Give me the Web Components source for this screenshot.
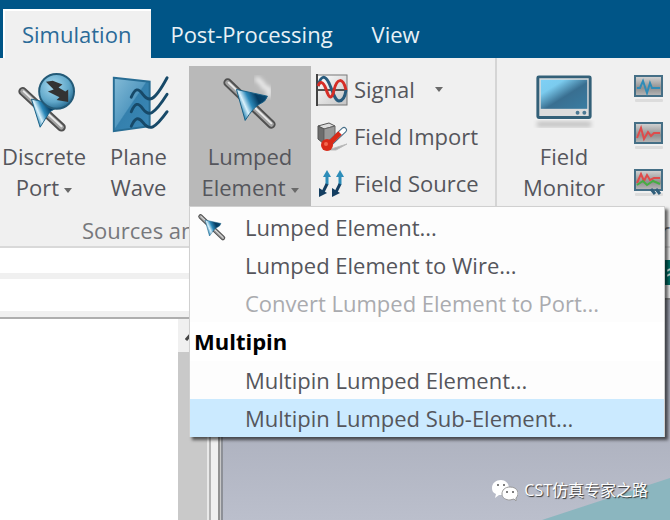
<!DOCTYPE html>
<html lang="en">
<head>
<meta charset="utf-8">
<title>Simulation</title>
<style>
  html, body {
    margin: 0;
    height: 100%;
    overflow: hidden;
  }

  body {
    font: 22px/31px "Open Sans", "Noto Sans", "Noto Sans CJK SC", sans-serif;
    color: #55565c;
  }
</style>
</head>
<body>
<cst-window>
  <cst-tabs slot="tabs">
    <cst-tab active>Simulation</cst-tab>
    <cst-tab>Post-Processing</cst-tab>
    <cst-tab>View</cst-tab>
  </cst-tabs>
  <cst-group slot="ribbon" class="sources" label="Sources and">
    <cst-button icon="port" menu style="--w: 88px">Discrete<br>Port</cst-button>
    <cst-button icon="wave" style="--w: 101px">Plane<br>Wave</cst-button>
    <cst-button icon="element" menu open style="--w: 122px">Lumped<br>Element<cst-menu slot="popup">
        <cst-item icon="element">Lumped Element...</cst-item>
        <cst-item>Lumped Element to Wire...</cst-item>
        <cst-item disabled>Convert Lumped Element to Port...</cst-item>
        <cst-heading>Multipin</cst-heading>
        <cst-item>Multipin Lumped Element...</cst-item>
        <cst-item selected>Multipin Lumped Sub-Element...</cst-item>
      </cst-menu></cst-button>
    <cst-column>
      <cst-small icon="signal" menu>Signal</cst-small>
      <cst-small icon="import">Field Import</cst-small>
      <cst-small icon="source">Field Source</cst-small>
    </cst-column>
  </cst-group>
  <cst-group slot="ribbon" class="monitors" label="Monitor">
    <cst-button icon="monitor" style="--w: 138px">Field<br>Monitor</cst-button>
    <cst-column flush>
      <cst-small icon="probe1" name="Voltage Monitor"></cst-small>
      <cst-small icon="probe2" name="Current Monitor"></cst-small>
      <cst-small icon="probe3" name="Field Probe"></cst-small>
    </cst-column>
  </cst-group>
  <cst-viewport slot="view">CST仿真专家之路</cst-viewport>
</cst-window>

<script>
const cone = `
  <defs><linearGradient id="cone" x1="0" y1="0.600" x2="1" y2="0.150">
    <stop offset="0.100" stop-color="#2f89b6"/><stop offset="0.260" stop-color="#d9f1fc"/>
    <stop offset="0.440" stop-color="#2a88b9"/><stop offset="0.680" stop-color="#053b61"/><stop offset="1" stop-color="#0c5078"/>
  </linearGradient></defs>`;

const screen = `
  <defs><linearGradient id="probe" x1="0" y1="0" x2="0" y2="1">
    <stop offset="0" stop-color="#d6d6d6"/><stop offset="0.600" stop-color="#8f8f8f"/><stop offset="1" stop-color="#b9b9b9"/>
  </linearGradient></defs>
  <rect x="2" y="25" width="28" height="3" rx="1" fill="#dcdcdc"/>
  <rect x="2" y="2" width="27" height="20" fill="url(#probe)" stroke="#456f86" stroke-width="2"/>`;

// every icon: [viewBox width, viewBox height, markup]
const icons = {
  port: [64, 64, `${cone}
    <defs><radialGradient id="ball" cx="0.400" cy="0.350" r="0.700">
      <stop offset="0" stop-color="#a6d9ef"/><stop offset="0.650" stop-color="#60a7c9"/><stop offset="1" stop-color="#22658b"/>
    </radialGradient></defs>
    <path d="M10 20L50 57" stroke="#505050" stroke-width="9" stroke-linecap="round"/>
    <path d="M10 20L50 57" stroke="#a2a2a2" stroke-width="5" stroke-linecap="round"/>
    <path d="M11 20L50 56" stroke="#e8e8e8" stroke-width="2" stroke-linecap="round"/>
    <path d="M19 28L47 34Q43 39 38 41L28 57Z" fill="url(#cone)" stroke="#195f84"/>
    <circle cx="45" cy="20" r="18" fill="url(#ball)" stroke="#235a77" stroke-width="2"/>
    <path d="M34 10L41 9L51 13L47 16L54 20L57 18L57 31L45 29L48 26L36 20L42 18Z" fill="#333"/>`],
  wave: [64, 64, `
    <defs><linearGradient id="plane" x1="0" y1="0" x2="1" y2="1">
      <stop offset="0" stop-color="#83bbd7"/><stop offset="0.480" stop-color="#559ac1"/>
      <stop offset="0.500" stop-color="#3480ad"/><stop offset="1" stop-color="#3b88b7"/>
    </linearGradient></defs>
    <path d="M6 6L43 10V56L6 61Z" fill="url(#plane)" stroke="#286d94" stroke-width="2"/>
    <g fill="none" stroke="#174968" stroke-width="3" stroke-linecap="round">
      <path d="M24 26C28 17 31 16 36 23C42 31 47 32 61 6"/>
      <path d="M24 41C28 32 31 31 36 38C42 46 47 45 61 23"/>
      <path d="M24 56C28 47 31 46 36 52C43 61 48 59 61 41"/>
    </g>`],
  element: [64, 64, `${cone}
    <defs><filter id="soft"><feGaussianBlur stdDeviation="2"/></filter></defs>
    <path class="glow" d="M38 6L46 13M44 14L52 18L51 26" fill="none" stroke="#eee" stroke-width="5" filter="url(#soft)"/>
    <path d="M9 11L54 54" stroke="#505050" stroke-width="9" stroke-linecap="round"/>
    <path d="M9 11L54 54" stroke="#a2a2a2" stroke-width="5" stroke-linecap="round"/>
    <path d="M10 11L54 53" stroke="#e8e8e8" stroke-width="2" stroke-linecap="round"/>
    <path d="M18 18L50 25Q48 31 42 33Q36 36 27 50Z" fill="url(#cone)" stroke="#195f84"/>`],
  signal: [32, 32, `
    <defs><linearGradient id="sg" x1="0" y1="0" x2="1" y2="1">
      <stop offset="0" stop-color="#fff"/><stop offset="1" stop-color="#c4c4c4"/>
    </linearGradient></defs>
    <rect x="1" y="1" width="30" height="30" fill="url(#sg)" stroke="#777"/>
    <path d="M1 0V32" stroke="#444" stroke-width="2"/><path d="M2 16H31" stroke="#555" stroke-width="2"/>
    <path d="M2 12C5 1 9 1 13 9C17 18 19 27 23 27C27 27 29 23 30 16" fill="none" stroke="#285b7d" stroke-width="3"/>
    <path d="M2 12C4 7 7 7 10 15C13 25 16 26 18 16C21 4 27 3 30 16" fill="none" stroke="#d52d26" stroke-width="3"/>`],
  import: [32, 32, `
    <path d="M12 29L31 23L20 29Z" fill="#aaa" stroke="#bbb"/>
    <path d="M2 5L13 2L19 5L8 8Z" fill="#ddd" stroke="#555"/>
    <path d="M2 5L8 8V23L2 18Z" fill="#6d6d6d" stroke="#555"/>
    <path d="M8 8L19 5V18L8 23Z" fill="#999" stroke="#666"/>
    <path d="M12 24L28 9" stroke="#466e88" stroke-width="6" stroke-linecap="round"/>
    <path d="M13 23L28 9" stroke="#fff" stroke-width="4" stroke-linecap="round"/>
    <path d="M12 24L24 12" stroke="#d92a18" stroke-width="5"/>
    <circle cx="11" cy="24" r="6" fill="#d92a18"/><circle cx="10" cy="23" r="2" fill="#f36a50"/>`],
  source: [32, 32, `
    <path d="M11 17V7" stroke="#2d8db9" stroke-width="3"/><path d="M7 9L11 2L15 9Z" fill="#2d8db9"/>
    <path d="M11 16L7 24" stroke="#143e61" stroke-width="3"/><path d="M3 20V29L11 25Z" fill="#143e61"/>
    <path d="M24 17V7" stroke="#2d8db9" stroke-width="3"/><path d="M20 9L24 2L28 9Z" fill="#2d8db9"/>
    <path d="M24 16L20 24" stroke="#143e61" stroke-width="3"/><path d="M16 20V29L24 25Z" fill="#143e61"/>`],
  monitor: [64, 64, `
    <defs>
      <linearGradient id="lcd" x1="0" y1="0" x2="1" y2="1">
        <stop offset="0" stop-color="#7fd0f5"/><stop offset="0.250" stop-color="#7bcbee"/>
        <stop offset="0.550" stop-color="#396f91"/><stop offset="1" stop-color="#397da2"/>
      </linearGradient>
      <filter id="shade"><feGaussianBlur stdDeviation="2"/></filter>
    </defs>
    <rect x="4" y="51" width="56" height="6" fill="#c4c4c4" filter="url(#shade)"/>
    <rect x="5" y="5" width="54" height="42" rx="1" fill="#dcdcdc" stroke="#336078" stroke-width="3"/>
    <rect x="8" y="8" width="48" height="30" fill="url(#lcd)"/>
    <circle cx="46" cy="42" r="2" fill="#4a7893"/><circle cx="53" cy="42" r="2" fill="#4a7893"/>`],
  probe1: [32, 32, `${screen}<path d="M4 14H7L10 7L14 19L17 9L19 14H27" fill="none" stroke="#2f8cb8" stroke-width="2"/>`],
  probe2: [32, 32, `${screen}<path d="M4 17L8 7L11 18L15 11L18 15L21 12H27" fill="none" stroke="#df4b4b" stroke-width="2"/>`],
  probe3: [32, 32, `${screen}<path d="M4 15L8 6L11 13L14 7L17 12L21 10H27" fill="none" stroke="#df4b4b" stroke-width="2"/>
    <path d="M4 17L10 13L14 17L20 13L27 16" fill="none" stroke="#46ad43" stroke-width="2"/>
    <path d="M18 21L22 26M23 21L27 26" stroke="#315f7b" stroke-width="3"/>`],
};

function icon(name, size) {
  if (!icons[name]) return "";
  const [w, h, body] = icons[name];
  return `<svg class="icon" width="${size}" height="${size}" viewBox="0 0 ${w} ${h}" aria-hidden="true">${body}</svg>`;
}

const reset = `
  button {
    border: 0;
    margin: 0;
    padding: 0;
    background: none;
    font: inherit;
    color: inherit;
    text-align: inherit;
    white-space: nowrap;
  }
  svg { display: block; flex: none; }
  .arrow {
    display: inline-block;
    border: 4px solid transparent;
    border-top: 5px solid #6a6a6a;
    border-bottom: 0;
    vertical-align: middle;
  }`;

function define(name, render) {
  customElements.define(name, class extends HTMLElement {
    constructor() {
      super();
      this.attachShadow({ mode: "open" });
    }

    connectedCallback() {
      this.shadowRoot.innerHTML = render(this);
    }
  });
}

define("cst-window", () => `
  <style>
    :host { display: flex; flex-direction: column; height: 100vh; background: #fff; }
    .ribbon { display: flex; flex: none; background: #f0f0f0; border-bottom: 2px solid #d9d9d9; }
    main { display: flex; flex: 1; min-height: 0; }
    .side { display: flex; flex-direction: column; width: 223px; }
    .band { height: 25px; background: #fff; border-bottom: 6px solid #f0f0f0; }
    .tall { height: 32px; }
    .tree { display: flex; flex: 1; border-top: 2px solid #aeaeae; }
    .pane { flex: 1; background: #fff; }
    .scroll { width: 29px; background: #c9c9c9; border-right: 2px solid #e9e9e9; }
    .up { display: block; width: 100%; height: 33px; border: 0; padding: 0 0 0 7px; background: #f0f0f0; }
    .up svg { display: block; }
    .splitter { width: 7px; background: #f0f0f0; border-left: 2px solid #b3b3b3; border-right: 2px solid #929292; }
    .frame { width: 1px; background: #c8c8c8; border-right: 2px solid #8d9097; }
    .doc { display: flex; flex: 1; flex-direction: column; }
    .files { display: flex; justify-content: flex-end; padding: 12px 0 13px; background: #f0f0f0; border-bottom: 2px solid #8c8c8c; }
    .file { width: 24px; height: 25px; border: 0; padding: 0; background: #00746b; }
    .file svg { display: block; margin-left: auto; }
  </style>
  <slot name="tabs"></slot>
  <div class="ribbon"><slot name="ribbon"></slot></div>
  <main>
    <div class="side">
      <div class="band"></div>
      <div class="band tall"></div>
      <div class="tree">
        <div class="pane"></div>
        <div class="scroll"><button class="up" aria-label="Scroll up"><svg width="14" height="14" viewBox="0 0 14 14"><path d="M1 11L7 4L13 11" fill="none" stroke="#444" stroke-width="3"/></svg></button></div>
        <div class="splitter"></div>
        <div class="frame"></div>
      </div>
    </div>
    <div class="doc">
      <div class="files"><button class="file" aria-label="Model"><svg width="3" height="10" viewBox="0 0 3 10"><path d="M0 3L3 1M0 8L3 6" stroke="#cfe8e4" stroke-width="2"/></svg></button></div>
      <slot name="view"></slot>
    </div>
  </main>`);

define("cst-tabs", () => `
  <style>
    :host { display: flex; align-items: flex-end; flex: none; height: 58px; padding-left: 3px; box-sizing: border-box; background: #005587; }
  </style>
  <slot></slot>`);

define("cst-tab", () => `
  <style>
    ${reset}
    :host { display: block; color: #e8f1f6; }
    button { height: 49px; padding: 2px 20px 0 19px; }
    :host([active]) button { background: #f0f0f0; color: #2a6a98; box-shadow: inset 0 2px #fff, inset 2px 0 #fff; }
  </style>
  <button role="tab"><slot></slot></button>`);

define("cst-group", el => `
  <style>
    :host { display: flex; flex-direction: column; flex: none; }
    :host(.sources) { width: 495px; }
    :host(.monitors) { flex: 1; min-width: 0; box-shadow: inset 2px 0 #d5d5d5; }
    .tools { display: flex; padding-top: 8px; height: 140px; }
    .label { padding: 9px 0 0 82px; color: #77787c; white-space: nowrap; }
    :host(.monitors) .label { padding-left: 0; text-align: right; }
  </style>
  <div class="tools"><slot></slot></div>
  <div class="label">${el.getAttribute("label")}</div>`);

define("cst-button", el => `
  <style>
    ${reset}
    :host { display: block; flex: none; position: relative; width: var(--w); }
    button { display: flex; flex-direction: column; align-items: center; width: 100%; height: 140px; text-align: center; }
    :host([open]) button { background: #b9b9b9; }
    .icon { margin: 6px 0 7px; }
    .arrow { margin-left: 5px; }
  </style>
  <button>${icon(el.getAttribute("icon"), 62)}<span><slot></slot>${el.hasAttribute("menu") ? `<i class="arrow"></i>` : ""}</span></button>
  <slot name="popup"></slot>`);

define("cst-column", () => `
  <style>
    :host { display: flex; flex-direction: column; padding-left: 5px; }
    :host([flush]) { padding-left: 0; }
  </style>
  <slot></slot>`);

define("cst-small", el => `
  <style>
    ${reset}
    :host { display: block; }
    button { display: flex; align-items: center; gap: 6px; height: 47px; }
    .arrow { margin-left: 14px; }
  </style>
  <button aria-label="${el.getAttribute("name") || el.textContent}">${icon(el.getAttribute("icon"), 32)}<slot></slot>
  ${el.hasAttribute("menu") ? `<i class="arrow"></i>` : ""}</button>`);

define("cst-menu", () => `
  <style>
    :host {
      display: block;
      position: absolute;
      z-index: 2;
      top: 100%;
      left: 0;
      width: 476px;
      box-sizing: border-box;
      padding-top: 1px;
      background: #fdfdfd;
      border: 1px solid #d0d0d0;
      border-bottom: 0;
      box-shadow: 3px 3px 3px #0009;
      text-align: left;
    }
  </style>
  <slot></slot>`);

define("cst-item", el => `
  <style>
    ${reset}
    :host { display: block; }
    button { display: flex; align-items: center; width: 100%; height: 38px; }
    .mark { width: 55px; padding-left: 6px; box-sizing: border-box; }
    .glow { display: none; }
    :host([disabled]) { color: #aaabaf; }
    :host([selected]) { background: #cbeaff; }
  </style>
  <button ${el.hasAttribute("disabled") ? "disabled" : ""}><span class="mark">${icon(el.getAttribute("icon"), 32)}</span><slot></slot></button>`);

define("cst-heading", () => `
  <style>
    :host { display: block; padding: 4px; background: #fff; color: #000; font-weight: bold; }
  </style>
  <slot></slot>`);

define("cst-viewport", () => `
  <style>
    :host { display: flex; flex: 1; align-items: flex-end; justify-content: flex-end; position: relative; background: linear-gradient(#9b9fad, #bbbfcc); }
    .model { position: absolute; right: 0; bottom: 0; }
    .mark { display: flex; align-items: center; gap: 6px; position: relative; padding: 0 22px 14px 0; color: #fff; font-size: 16px; text-shadow: 1px 1px 1px #333; }
  </style>
  <svg class="model" width="128" height="42" viewBox="0 0 128 42" aria-hidden="true"><path d="M0 42L128 0V42Z" fill="#8bb6bf"/></svg>
  <div class="mark">
    <svg width="26" height="22" viewBox="0 0 26 22" aria-hidden="true">
      <path d="M9 0C4 0 0 3 0 8C0 11 1 13 4 14L3 18L7 15H10L17 8C17 3 13 0 9 0Z" fill="#fff"/>
      <path d="M18 7C13 7 10 10 10 14C10 18 14 20 18 20L22 19L24 21V18C28 14 26 7 18 7Z" fill="#fff" stroke="#999"/>
      <g fill="#555"><circle cx="6" cy="5" r="1"/><circle cx="12" cy="5" r="1"/><circle cx="15" cy="12" r="1"/><circle cx="21" cy="12" r="1"/></g>
    </svg>
    <span><slot></slot></span>
  </div>`);
</script>
</body>
</html>
